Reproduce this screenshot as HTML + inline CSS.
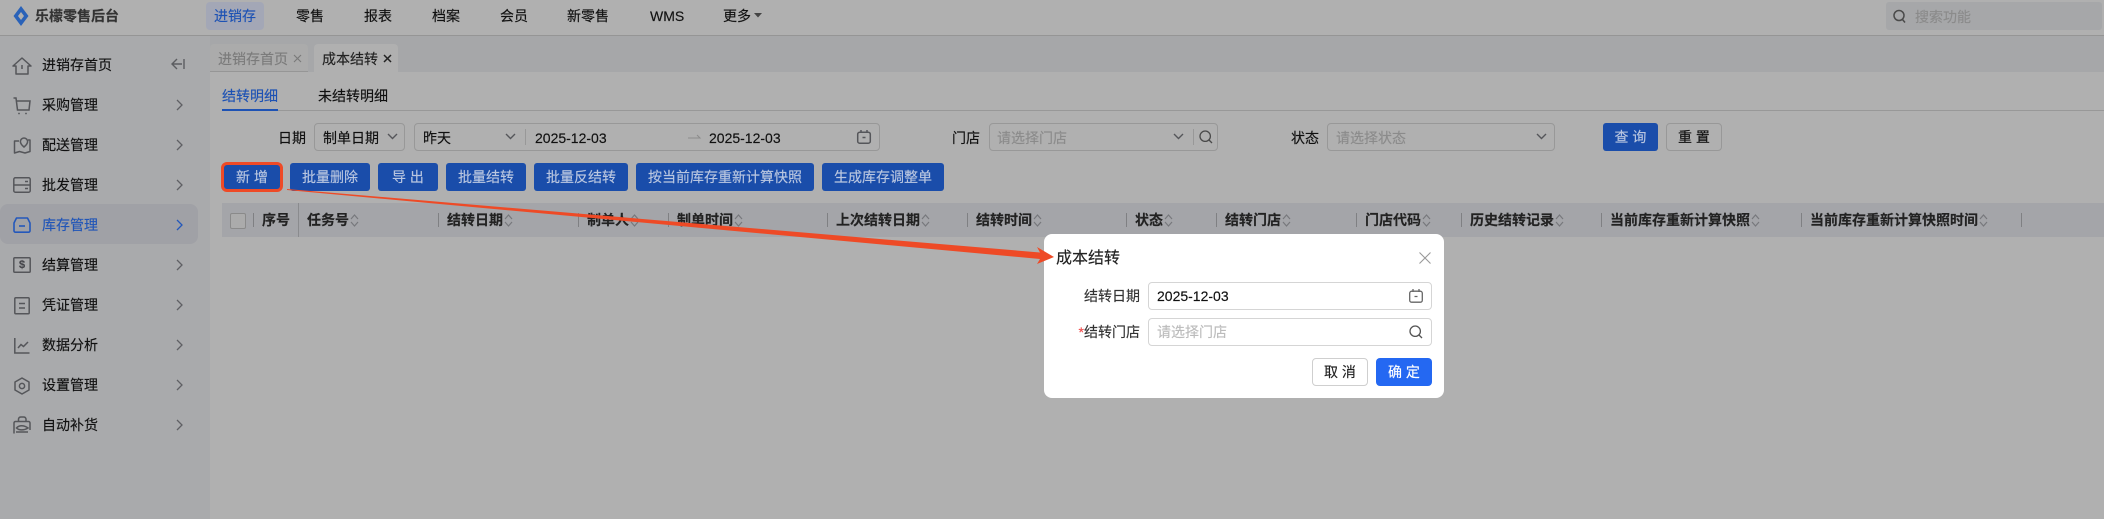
<!DOCTYPE html>
<html lang="zh-CN">
<head>
<meta charset="utf-8">
<title>成本结转</title>
<style>
*{box-sizing:border-box}
html,body{margin:0;padding:0;width:2104px;height:519px;overflow:hidden;background:#b0b0b0;font-family:"Liberation Sans","Noto Sans CJK SC",sans-serif;font-size:14px;color:#111;-webkit-text-stroke:.15px currentColor}
.a{position:absolute;white-space:nowrap}
.t{position:absolute;white-space:nowrap;line-height:20px;height:20px}
svg{position:absolute;overflow:visible;fill:none}
.side{left:0;top:36px;width:210px;height:483px;background:#a9aaac;position:absolute}
.btn{position:absolute;top:163px;height:28px;border-radius:3px;background:#1a4daa;color:#b9c6e0;text-align:center;line-height:28px;white-space:nowrap}
.box{position:absolute;border:1px solid #989898;border-radius:4px;height:28px;top:123px}
.th{position:absolute;top:210px;line-height:20px;font-weight:700;color:#222;white-space:nowrap}
.dv{position:absolute;top:213px;width:1px;height:14px;background:#7f8083}
.ph{color:#8b8b8b}
.ic{stroke:#55565a;stroke-width:1.5}
</style>
</head>
<body>
<!-- top bar -->
<div class="a" style="left:0;top:0;width:2104px;height:35px;background:#b0b0b0"></div>
<div class="a" style="left:0;top:35px;width:2104px;height:1px;background:#959595"></div>
<svg style="left:13px;top:6px" width="16" height="20" viewBox="0 0 16 20"><path fill-rule="evenodd" d="M8 0L15.5 10L8 20L.5 10ZM8 6L5 10L8 14L11 10Z" fill="#2a62b8"/></svg>
<div class="t" style="left:35px;top:6px;color:#333;font-weight:700;font-size:14px">乐檬零售后台</div>
<div class="a" style="left:206px;top:2px;width:58px;height:28px;border-radius:4px;background:#a3a7b6"></div>
<div class="t" style="left:214px;top:6px;color:#1d52b4">进销存</div>
<div class="t" style="left:296px;top:6px">零售</div>
<div class="t" style="left:364px;top:6px">报表</div>
<div class="t" style="left:432px;top:6px">档案</div>
<div class="t" style="left:500px;top:6px">会员</div>
<div class="t" style="left:567px;top:6px">新零售</div>
<div class="t" style="left:650px;top:6px">WMS</div>
<div class="t" style="left:723px;top:6px">更多</div>
<svg style="left:754px;top:13px" width="8" height="5"><path d="M0 0H8L4 4.5Z" fill="#444"/></svg>
<div class="a" style="left:1886px;top:2px;width:216px;height:28px;border-radius:3px;background:#a6a7a9"></div>
<svg style="left:1893px;top:9px" width="14" height="15" viewBox="0 0 14 15"><circle cx="6" cy="6.5" r="5" stroke="#4a4a4a" stroke-width="1.5"/><path d="M9.5 10.5L12 13.5" stroke="#4a4a4a" stroke-width="1.5"/></svg>
<div class="t ph" style="left:1915px;top:7px">搜索功能</div>

<!-- sidebar -->
<div class="side"></div>
<div class="a" style="left:0;top:204px;width:198px;height:40px;border-radius:8px;background:#a0a1a6"></div>
<svg style="left:12px;top:57px" width="20" height="18" viewBox="0 0 20 18"><path d="M1 9L10 1L19 9H16V17H4V9Z" class="ic" stroke-linejoin="round"/><path d="M10 8V12" class="ic"/></svg>
<div class="t" style="left:42px;top:55px">进销存首页</div>
<svg style="left:171px;top:58px" width="14" height="12" viewBox="0 0 14 12"><path d="M6 1L1 6L6 11M1 6H11M13 1V11" stroke="#5c5d61" stroke-width="1.4"/></svg>

<svg style="left:13px;top:97px" width="18" height="18" viewBox="0 0 18 18"><path d="M0.5 1H3L4.5 13H16L17 4H3.4" class="ic"/><circle cx="6" cy="16.5" r=".9" fill="#55565a"/><circle cx="13" cy="16.5" r=".9" fill="#55565a"/></svg>
<div class="t" style="left:42px;top:95px">采购管理</div>

<svg style="left:13px;top:137px" width="18" height="17" viewBox="0 0 18 17"><path d="M6 4H1.5V16L6.5 14.5L12 16L17 14.5V3H15" class="ic" stroke-linejoin="round"/><path d="M11 1A3.6 3.6 0 0 1 14.6 4.6C14.6 7 11 10 11 10S7.4 7 7.4 4.6A3.6 3.6 0 0 1 11 1Z" class="ic"/></svg>
<div class="t" style="left:42px;top:135px">配送管理</div>

<svg style="left:13px;top:177px" width="18" height="16" viewBox="0 0 18 16"><rect x=".8" y=".8" width="16.4" height="14.4" rx="1.5" class="ic" stroke-width="1.6"/><path d="M1 8H17M12 4.5H15M12 11.5H15" class="ic" stroke-width="1.6"/></svg>
<div class="t" style="left:42px;top:175px">批发管理</div>

<svg style="left:13px;top:217px" width="18" height="16" viewBox="0 0 18 16"><path d="M3.5 1H14.5L17 6V14A1.5 1.5 0 0 1 15.5 15.2H2.5A1.5 1.5 0 0 1 1 14V6Z" stroke="#2458bb" stroke-width="1.6" stroke-linejoin="round"/><path d="M6 9H12" stroke="#2458bb" stroke-width="1.6"/></svg>
<div class="t" style="left:42px;top:215px;color:#2156b8">库存管理</div>

<svg style="left:13px;top:257px" width="18" height="16" viewBox="0 0 18 16"><rect x=".8" y=".8" width="16.4" height="14.4" rx="1" class="ic" stroke-width="1.6"/></svg>
<div class="t" style="left:18px;top:255px;font-size:11px;font-weight:700;color:#44454a;width:8px;text-align:center">$</div>
<div class="t" style="left:42px;top:255px">结算管理</div>

<svg style="left:14px;top:297px" width="16" height="18" viewBox="0 0 16 18"><rect x=".8" y=".8" width="14.4" height="16" rx="1" class="ic" stroke-width="1.6"/><path d="M5 6.5H11M5 11H11" class="ic"/></svg>
<div class="t" style="left:42px;top:295px">凭证管理</div>

<svg style="left:14px;top:338px" width="16" height="16" viewBox="0 0 16 16"><path d="M.8 0V15H15.5" class="ic"/><path d="M4 10L7 6.5L9.5 8.5L14 4" class="ic" stroke-width="1.3"/></svg>
<div class="t" style="left:42px;top:335px">数据分析</div>

<svg style="left:14px;top:377px" width="16" height="18" viewBox="0 0 16 18"><path d="M8 1L15 5V13L8 17L1 13V5Z" class="ic" stroke-linejoin="round"/><circle cx="8" cy="9" r="2.6" class="ic"/></svg>
<div class="t" style="left:42px;top:375px">设置管理</div>

<svg style="left:13px;top:416px" width="18" height="18" viewBox="0 0 18 18"><path d="M1 17.5V7A1.5 1.5 0 0 1 2.5 5.5H15.5A1.5 1.5 0 0 1 17 7V14" class="ic"/><path d="M5.5 5.5V3A2.5 2.5 0 0 1 8 1H10.5A2.5 2.5 0 0 1 13 3V5.5M3 16H15" class="ic"/><path d="M3.5 12C6 9 11 9 15 12C11 14.5 6 14.5 3.5 12Z" class="ic" stroke-width="1.1"/></svg>
<div class="t" style="left:42px;top:415px">自动补货</div>

<svg style="left:176px;top:99px" width="8" height="12"><path d="M1 1L6 6L1 11" stroke="#5f6064" stroke-width="1.3"/></svg>
<svg style="left:176px;top:139px" width="8" height="12"><path d="M1 1L6 6L1 11" stroke="#5f6064" stroke-width="1.3"/></svg>
<svg style="left:176px;top:179px" width="8" height="12"><path d="M1 1L6 6L1 11" stroke="#5f6064" stroke-width="1.3"/></svg>
<svg style="left:176px;top:219px" width="8" height="12"><path d="M1 1L6 6L1 11" stroke="#2458bb" stroke-width="1.3"/></svg>
<svg style="left:176px;top:259px" width="8" height="12"><path d="M1 1L6 6L1 11" stroke="#5f6064" stroke-width="1.3"/></svg>
<svg style="left:176px;top:299px" width="8" height="12"><path d="M1 1L6 6L1 11" stroke="#5f6064" stroke-width="1.3"/></svg>
<svg style="left:176px;top:339px" width="8" height="12"><path d="M1 1L6 6L1 11" stroke="#5f6064" stroke-width="1.3"/></svg>
<svg style="left:176px;top:379px" width="8" height="12"><path d="M1 1L6 6L1 11" stroke="#5f6064" stroke-width="1.3"/></svg>
<svg style="left:176px;top:419px" width="8" height="12"><path d="M1 1L6 6L1 11" stroke="#5f6064" stroke-width="1.3"/></svg>

<!-- tabs -->
<div class="a" style="left:210px;top:36px;width:1894px;height:36px;background:#a6a7a9"></div>
<div class="a" style="left:210px;top:44px;width:98px;height:28px;background:#ababab;border-radius:4px 4px 0 0;border-bottom:1px solid #969696"></div>
<div class="a" style="left:314px;top:44px;width:84px;height:28px;background:#b0b0b0;border-radius:4px 4px 0 0"></div>
<div class="t" style="left:218px;top:49px;color:#7b7b7b">进销存首页</div>
<svg style="left:293px;top:54px" width="9" height="9"><path d="M1 1L8 8M8 1L1 8" stroke="#7b7b7b" stroke-width="1.2"/></svg>
<div class="t" style="left:322px;top:49px;color:#222">成本结转</div>
<svg style="left:383px;top:54px" width="9" height="9"><path d="M1 1L8 8M8 1L1 8" stroke="#222" stroke-width="1.5"/></svg>

<!-- sub tabs -->
<div class="t" style="left:222px;top:86px;color:#1d52b4">结转明细</div>
<div class="t" style="left:318px;top:86px">未结转明细</div>
<div class="a" style="left:222px;top:110px;width:1882px;height:1px;background:#989898"></div>
<div class="a" style="left:222px;top:109px;width:56px;height:2px;background:#1d52b4"></div>

<!-- filters -->
<div class="t" style="left:278px;top:128px">日期</div>
<div class="box" style="left:314px;width:91px"></div>
<div class="t" style="left:323px;top:128px">制单日期</div>
<svg style="left:387px;top:133px" width="11" height="7"><path d="M1 1L5.5 5.5L10 1" stroke="#55565a" stroke-width="1.4"/></svg>
<div class="box" style="left:414px;width:466px"></div>
<div class="t" style="left:423px;top:128px">昨天</div>
<svg style="left:505px;top:133px" width="11" height="7"><path d="M1 1L5.5 5.5L10 1" stroke="#55565a" stroke-width="1.4"/></svg>
<div class="a" style="left:525px;top:129px;width:1px;height:16px;background:#989898"></div>
<div class="t" style="left:535px;top:128px">2025-12-03</div>
<svg style="left:688px;top:134px" width="13" height="5"><path d="M0 4H12L9 1" stroke="#8b8b8b" stroke-width="1"/></svg>
<div class="t" style="left:709px;top:128px">2025-12-03</div>
<svg style="left:857px;top:130px" width="14" height="14" viewBox="0 0 14 14"><rect x=".7" y="2.2" width="12.6" height="11" rx="2" class="ic" stroke-width="1.3"/><path d="M4 0V3M10 0V3M5.5 7.5H8.5" class="ic" stroke-width="1.3"/></svg>

<div class="t" style="left:952px;top:128px">门店</div>
<div class="box" style="left:989px;width:229px"></div>
<div class="t ph" style="left:997px;top:128px">请选择门店</div>
<svg style="left:1173px;top:133px" width="11" height="7"><path d="M1 1L5.5 5.5L10 1" stroke="#55565a" stroke-width="1.4"/></svg>
<div class="a" style="left:1193px;top:129px;width:1px;height:16px;background:#989898"></div>
<svg style="left:1199px;top:130px" width="14" height="14" viewBox="0 0 14 14"><circle cx="6.2" cy="6.2" r="5.2" stroke="#4a4a4a" stroke-width="1.3"/><path d="M10 10L13 13" stroke="#4a4a4a" stroke-width="1.3"/></svg>

<div class="t" style="left:1291px;top:128px">状态</div>
<div class="box" style="left:1327px;width:228px"></div>
<div class="t ph" style="left:1336px;top:128px">请选择状态</div>
<svg style="left:1536px;top:133px" width="11" height="7"><path d="M1 1L5.5 5.5L10 1" stroke="#55565a" stroke-width="1.4"/></svg>

<div class="btn" style="left:1603px;top:123px;width:55px">查 询</div>
<div class="box" style="left:1666px;width:56px;text-align:center;line-height:26px">重 置</div>

<!-- action buttons -->
<div class="btn" style="left:222px;width:60px">新 增</div>
<div class="a" style="left:221px;top:162px;width:62px;height:30px;border:3px solid #ee4a26;border-radius:6px"></div>
<div class="btn" style="left:290px;width:80px">批量删除</div>
<div class="btn" style="left:378px;width:60px">导 出</div>
<div class="btn" style="left:446px;width:80px">批量结转</div>
<div class="btn" style="left:534px;width:94px">批量反结转</div>
<div class="btn" style="left:636px;width:178px">按当前库存重新计算快照</div>
<div class="btn" style="left:822px;width:122px">生成库存调整单</div>

<!-- table header -->
<div class="a" style="left:222px;top:203px;width:1882px;height:34px;background:#a4a5a9"></div>
<div class="a" style="left:230px;top:213px;width:16px;height:16px;border:1.5px solid #8a8a8a;border-radius:2px;background:#ababab"></div>
<div class="dv" style="left:253px"></div>
<div class="a" style="left:298px;top:203px;width:1px;height:34px;background:#8a8b8e"></div>
<div class="th" style="left:262px">序号</div>
<div class="th" style="left:307px">任务号</div><svg style="left:350px;top:214px" width="9" height="13"><path d="M1 5L4.5 1L8 5M1 8L4.5 12L8 8" stroke="#77787c" stroke-width="1.2"/></svg>
<div class="dv" style="left:438px"></div>
<div class="th" style="left:447px">结转日期</div><svg style="left:504px;top:214px" width="9" height="13"><path d="M1 5L4.5 1L8 5M1 8L4.5 12L8 8" stroke="#77787c" stroke-width="1.2"/></svg>
<div class="dv" style="left:578px"></div>
<div class="th" style="left:587px">制单人</div><svg style="left:630px;top:214px" width="9" height="13"><path d="M1 5L4.5 1L8 5M1 8L4.5 12L8 8" stroke="#77787c" stroke-width="1.2"/></svg>
<div class="dv" style="left:668px"></div>
<div class="th" style="left:677px">制单时间</div><svg style="left:734px;top:214px" width="9" height="13"><path d="M1 5L4.5 1L8 5M1 8L4.5 12L8 8" stroke="#77787c" stroke-width="1.2"/></svg>
<div class="dv" style="left:827px"></div>
<div class="th" style="left:836px">上次结转日期</div><svg style="left:921px;top:214px" width="9" height="13"><path d="M1 5L4.5 1L8 5M1 8L4.5 12L8 8" stroke="#77787c" stroke-width="1.2"/></svg>
<div class="dv" style="left:967px"></div>
<div class="th" style="left:976px">结转时间</div><svg style="left:1033px;top:214px" width="9" height="13"><path d="M1 5L4.5 1L8 5M1 8L4.5 12L8 8" stroke="#77787c" stroke-width="1.2"/></svg>
<div class="dv" style="left:1126px"></div>
<div class="th" style="left:1135px">状态</div><svg style="left:1164px;top:214px" width="9" height="13"><path d="M1 5L4.5 1L8 5M1 8L4.5 12L8 8" stroke="#77787c" stroke-width="1.2"/></svg>
<div class="dv" style="left:1216px"></div>
<div class="th" style="left:1225px">结转门店</div><svg style="left:1282px;top:214px" width="9" height="13"><path d="M1 5L4.5 1L8 5M1 8L4.5 12L8 8" stroke="#77787c" stroke-width="1.2"/></svg>
<div class="dv" style="left:1356px"></div>
<div class="th" style="left:1365px">门店代码</div><svg style="left:1422px;top:214px" width="9" height="13"><path d="M1 5L4.5 1L8 5M1 8L4.5 12L8 8" stroke="#77787c" stroke-width="1.2"/></svg>
<div class="dv" style="left:1461px"></div>
<div class="th" style="left:1470px">历史结转记录</div><svg style="left:1555px;top:214px" width="9" height="13"><path d="M1 5L4.5 1L8 5M1 8L4.5 12L8 8" stroke="#77787c" stroke-width="1.2"/></svg>
<div class="dv" style="left:1601px"></div>
<div class="th" style="left:1610px">当前库存重新计算快照</div><svg style="left:1751px;top:214px" width="9" height="13"><path d="M1 5L4.5 1L8 5M1 8L4.5 12L8 8" stroke="#77787c" stroke-width="1.2"/></svg>
<div class="dv" style="left:1801px"></div>
<div class="th" style="left:1810px">当前库存重新计算快照时间</div><svg style="left:1979px;top:214px" width="9" height="13"><path d="M1 5L4.5 1L8 5M1 8L4.5 12L8 8" stroke="#77787c" stroke-width="1.2"/></svg>
<div class="dv" style="left:2021px"></div>

<!-- dialog -->
<div class="a" style="left:1044px;top:234px;width:400px;height:164px;background:#fff;border-radius:8px"></div>
<div class="t" style="left:1056px;top:248px;font-size:16px;line-height:22px;height:22px;color:#222">成本结转</div>
<svg style="left:1419px;top:252px" width="12" height="12"><path d="M.5 .5L11.5 11.5M11.5 .5L.5 11.5" stroke="#9a9a9a" stroke-width="1.1"/></svg>
<div class="t" style="left:1084px;top:286px;width:56px;text-align:right;color:#333">结转日期</div>
<div class="a" style="left:1148px;top:282px;width:284px;height:28px;border:1px solid #d5d5d5;border-radius:4px"></div>
<div class="t" style="left:1157px;top:286px;color:#111">2025-12-03</div>
<svg style="left:1409px;top:289px" width="14" height="14" viewBox="0 0 14 14"><rect x=".7" y="2.2" width="12.6" height="11" rx="2" stroke="#666" stroke-width="1.3"/><path d="M4 0V3M10 0V3M5.5 7.5H8.5" stroke="#666" stroke-width="1.3"/></svg>
<div class="t" style="left:1076px;top:322px;width:64px;text-align:right;color:#333"><span style="color:#f04b4b">*</span>结转门店</div>
<div class="a" style="left:1148px;top:318px;width:284px;height:28px;border:1px solid #d5d5d5;border-radius:4px"></div>
<div class="t" style="left:1157px;top:322px;color:#bcbcbc">请选择门店</div>
<svg style="left:1409px;top:325px" width="14" height="14" viewBox="0 0 14 14"><circle cx="6.2" cy="6.2" r="5.2" stroke="#555" stroke-width="1.3"/><path d="M10 10L13 13" stroke="#555" stroke-width="1.3"/></svg>
<div class="a" style="left:1312px;top:358px;width:56px;height:28px;border:1px solid #cfcfcf;border-radius:4px;text-align:center;line-height:26px;color:#222">取 消</div>
<div class="a" style="left:1376px;top:358px;width:56px;height:28px;background:#2468f2;border-radius:4px;text-align:center;line-height:28px;color:#fff">确 定</div>

<!-- annotation arrow -->
<svg style="left:0;top:0" width="2104" height="519" viewBox="0 0 2104 519"><path d="M287 189L1040 252.5L1037 247L1054 257L1037 264L1040 259L287 190Z" fill="#ee4a26"/></svg>
</body>
</html>
